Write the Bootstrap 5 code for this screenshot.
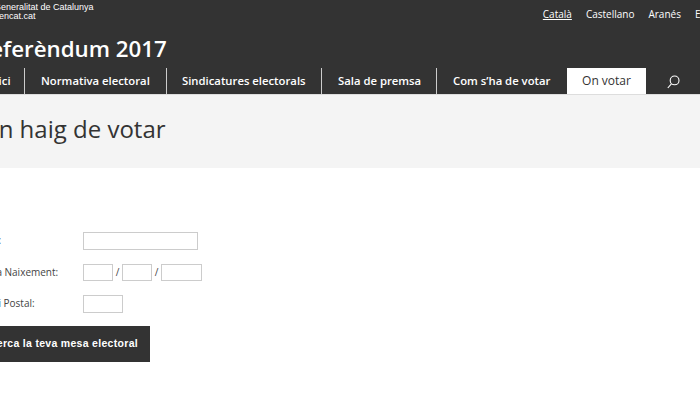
<!DOCTYPE html>
<html lang="ca">
<head>
<meta charset="utf-8">
<title>Referèndum 2017</title>
<link rel="stylesheet" href="https://cdn.jsdelivr.net/npm/bootstrap@5.3.0/dist/css/bootstrap.min.css">
<style>
html,body{height:100%;overflow:hidden}
body{font-family:"Open Sans",sans-serif;background:#fff;color:#333}
.site-head{background:#333;height:94px;color:#fff}
.head-top{height:28px}
.brand-txt{font-family:"Liberation Sans",sans-serif;font-size:9px;line-height:9px;margin-left:-6px;padding-top:3px;color:#fff}
.brand-txt span{display:block;white-space:nowrap}
.lang-list{font-size:10px;gap:14px;margin-right:-28px;padding-top:7px}
.lang-list a{color:#fff;text-decoration:none;line-height:14px}
.lang-list a.cur{text-decoration:underline}
.site-title{font-size:22.3px;font-weight:600;line-height:28px;margin:7px 0 0 -24px;height:33px;white-space:nowrap}
.main-nav{height:26px;font-size:11.3px;font-weight:600;margin-left:-12px}
.main-nav a{color:#fff;text-decoration:none;height:26px;line-height:26px;border-right:1px solid #ccc;white-space:nowrap;display:block}
.main-nav a.sel{background:#fff;color:#333;font-size:12px;font-weight:400;border:0;width:79px;text-align:center}
.main-nav a.plain{border:0}
.search-ic{margin-left:21px;margin-top:7px}
.page-band{background:#f4f4f4;height:74px;border-top:1px solid #ddd}
.page-band h1{font-size:24px;font-weight:400;color:#333;margin:0 0 0 -20px;line-height:32px;padding-top:18px;white-space:nowrap}
.form-area{padding-top:64px;font-size:10px;color:#444}
.form-line{display:flex;align-items:center;height:17.5px;margin-bottom:14px}
.lbl{width:103px;margin-left:-20px;white-space:nowrap;flex:none;display:block}
.lbl-id{width:102px;margin-left:-19px}
.fld{height:17.5px;border:1px solid #ccc;background:#fff;display:block;flex:none}
.sep{width:9px;text-align:center;flex:none;font-size:10px}
.go-btn{background:#333;color:#fff;border:0;border-radius:0;font-family:"Liberation Sans",sans-serif;font-weight:700;font-size:10.5px;letter-spacing:.3px;width:190px;height:36px;margin-left:-40px;margin-top:-1px;padding:0 12px 0 0;text-align:right;white-space:nowrap}
.go-btn:hover{background:#333;color:#fff}
</style>
</head>
<body>
<header class="site-head">
  <div class="head-top d-flex justify-content-between align-items-start">
    <div class="brand-txt"><span>Generalitat de Catalunya</span><span>gencat.cat</span></div>
    <nav class="lang-list d-flex"><a class="cur" href="#">Català</a><a href="#">Castellano</a><a href="#">Aranés</a><a href="#">English</a></nav>
  </div>
  <div class="site-title">Referèndum 2017</div>
  <nav class="main-nav d-flex">
    <a href="#" style="width:37px;padding-left:0">Inici</a>
    <a href="#" style="width:142px;padding-left:16px">Normativa electoral</a>
    <a href="#" style="width:155px;padding-left:15px">Sindicatures electorals</a>
    <a href="#" style="width:115px;padding-left:16px">Sala de premsa</a>
    <a href="#" class="plain" style="width:130px;padding-left:16px">Com s’ha de votar</a>
    <a href="#" class="sel">On votar</a>
    <svg class="search-ic" width="13" height="14" viewBox="0 0 13 14" fill="none" stroke="#fff" stroke-width="1.1"><circle cx="7.6" cy="5.4" r="4.4"/><path d="M4.4 8.8 0.8 13"/></svg>
  </nav>
</header>
<section class="page-band"><h1>On haig de votar</h1></section>
<main class="form-area">
  <div class="form-line"><span class="lbl lbl-id">DNI:</span><span class="fld" style="width:115px"></span></div>
  <div class="form-line"><span class="lbl">Data Naixement:</span><span class="fld" style="width:30px"></span><span class="sep">/</span><span class="fld" style="width:30px"></span><span class="sep">/</span><span class="fld" style="width:41px"></span></div>
  <div class="form-line"><span class="lbl">Codi Postal:</span><span class="fld" style="width:40px"></span></div>
  <button class="go-btn btn" type="button">Cerca la teva mesa electoral</button>
</main>
<script src="https://cdn.jsdelivr.net/npm/bootstrap@5.3.0/dist/js/bootstrap.bundle.min.js"></script>
</body>
</html>
